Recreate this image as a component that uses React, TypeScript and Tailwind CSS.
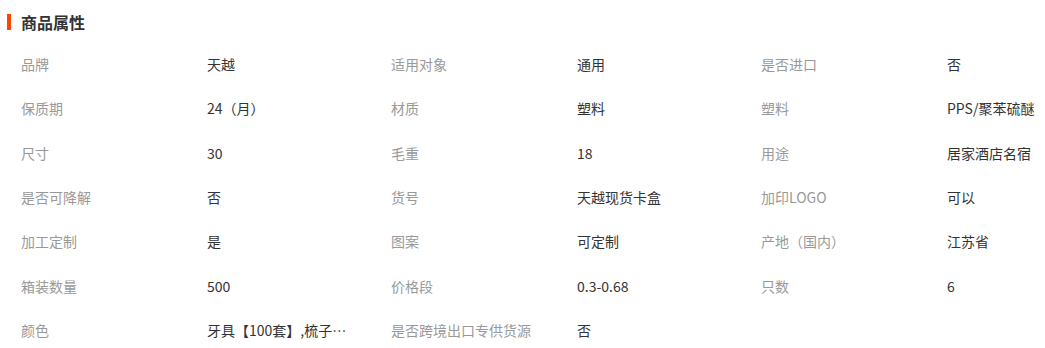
import React from "react";

const rows: [string, string][][] = [
  [["品牌", "天越"], ["适用对象", "通用"], ["是否进口", "否"]],
  [["保质期", "24（月）"], ["材质", "塑料"], ["塑料", "PPS/聚苯硫醚"]],
  [["尺寸", "30"], ["毛重", "18"], ["用途", "居家酒店名宿"]],
  [["是否可降解", "否"], ["货号", "天越现货卡盒"], ["加印LOGO", "可以"]],
  [["加工定制", "是"], ["图案", "可定制"], ["产地（国内）", "江苏省"]],
  [["箱装数量", "500"], ["价格段", "0.3-0.68"], ["只数", "6"]],
  [["颜色", "牙具【100套】,梳子【100套】,浴帽【100套】"], ["是否跨境出口专供货源", "否"]],
];

export default function App() {
  return (
    <div
      className="w-[1045px] h-[348px] bg-white overflow-hidden"
      style={{ fontFamily: '"Microsoft YaHei", "Noto Sans CJK SC", "Noto Sans", sans-serif' }}
    >
      <div className="h-[42px] flex items-start pt-[11px] pl-[7px]">
        <div className="flex items-center gap-[10px]">
          <div className="w-[4px] h-[16px] bg-[#ff4400]" />
          <div className="text-[16px] leading-[22px] font-bold text-[#333333]">商品属性</div>
        </div>
      </div>
      <div className="pl-[21px]">
        {rows.map((row, i) => (
          <div
            key={i}
            className="grid grid-cols-[186px_184px_186px_184px_186px_184px] h-[44.33px] items-center text-[14px] leading-[20px] whitespace-nowrap"
          >
            {row.map(([k, v], j) => (
              <React.Fragment key={j}>
                <div className="text-[#999999] overflow-hidden pr-[8px]">{k}</div>
                <div className="text-[#333333] overflow-hidden text-ellipsis max-w-[152px]">{v}</div>
              </React.Fragment>
            ))}
          </div>
        ))}
      </div>
    </div>
  );
}
